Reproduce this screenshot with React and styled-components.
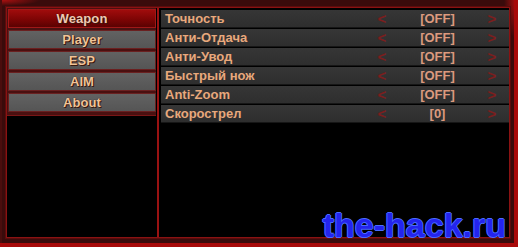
import React from "react";
import styled, { createGlobalStyle } from "styled-components";

const Global = createGlobalStyle`
  html, body { margin: 0; padding: 0; background: #000; }
  * { box-sizing: border-box; }
`;

const Frame = styled.div`
  position: relative;
  width: 518px;
  height: 247px;
  padding: 7px 8px 9px 6px;
  background:
    radial-gradient(ellipse 40px 6px at 0 0, #b01010 0%, rgba(176,16,16,0) 100%),
    radial-gradient(ellipse 14px 40px at 518px 0, #c01010 0%, rgba(192,16,16,0) 100%),
    #3a0b0b;
  box-shadow: inset -4px -4px 0 #a80a0a, inset 2px 0 0 #4a0d0d;
  font-family: "Liberation Sans", Arial, sans-serif;
  overflow: hidden;
`;

const Inner = styled.div`
  display: flex;
  height: 100%;
  background: #000;
  border: 1px solid #8a1212;
  box-shadow: 0 0 0 1px #5a0c0c;
`;

const Sidebar = styled.div`
  width: 152px;
  display: flex;
  flex-direction: column;
  border-right: 2px solid #9a1212;
  padding-right: 1px;
`;

const ButtonList = styled.div`
  display: flex;
  flex-direction: column;
  gap: 2px;
  padding: 1px 0 3px 1px;
  background: #4a1010;
  border-bottom: 1px solid #7a1616;
`;

const MenuButton = styled.div`
  height: 19px;
  display: flex;
  align-items: center;
  justify-content: center;
  font-size: 13px;
  font-weight: bold;
  letter-spacing: 0.1px;
  border: 1px solid ${(p) => (p.$active ? "#a01818" : "#6a2020")};
  background: ${(p) =>
    p.$active
      ? "linear-gradient(#a00c0c, #7a0404 60%, #5a0202)"
      : "linear-gradient(#626262, #555555)"};
  color: ${(p) => (p.$active ? "#f2c8b0" : "#f0c497")};
  text-shadow: 0 0 1px #2a0a0a, 1px 1px 0 #3a1a10;
`;

const Content = styled.div`
  flex: 1;
  display: flex;
  flex-direction: column;
  gap: 1px;
  padding: 2px 0 0 2px;
`;

const Row = styled.div`
  height: 18px;
  display: grid;
  grid-template-columns: 214px 14px 97px 12px 1fr;
  align-items: center;
  background: linear-gradient(#363636, #2e2e2e);
  border-bottom: 1px solid #161616;
  font-size: 13px;
  font-weight: bold;
`;

const Label = styled.span`
  padding-left: 4px;
  color: #e8a87c;
  white-space: nowrap;
`;

const Arrow = styled.span`
  text-align: center;
  color: #7c1e1e;
  font-size: 15px;
  line-height: 16px;
`;

const Value = styled.span`
  text-align: center;
  color: #dc9a7e;
`;

const Watermark = styled.div`
  position: absolute;
  right: 12px;
  bottom: 5px;
  font-size: 34px;
  line-height: 34px;
  font-weight: bold;
  color: #2424ee;
  text-shadow: 1px 0 0 #4a6cff, -1px 0 0 #4a6cff, 0 1px 0 #4a6cff,
    0 -1px 0 #4a6cff;
`;

const menu = ["Weapon", "Player", "ESP", "AIM", "About"];
const rows = [
  ["Точность", "[OFF]"],
  ["Анти-Отдача", "[OFF]"],
  ["Анти-Увод", "[OFF]"],
  ["Быстрый нож", "[OFF]"],
  ["Anti-Zoom", "[OFF]"],
  ["Скорострел", "[0]"],
];

export default function App() {
  return (
    <>
      <Global />
      <Frame>
        <Inner>
          <Sidebar>
            <ButtonList>
              {menu.map((m, i) => (
                <MenuButton key={m} $active={i === 0}>
                  {m}
                </MenuButton>
              ))}
            </ButtonList>
          </Sidebar>
          <Content>
            {rows.map(([l, v]) => (
              <Row key={l}>
                <Label>{l}</Label>
                <Arrow>&lt;</Arrow>
                <Value>{v}</Value>
                <Arrow>&gt;</Arrow>
                <span />
              </Row>
            ))}
          </Content>
        </Inner>
        <Watermark>the-hack.ru</Watermark>
      </Frame>
    </>
  );
}
